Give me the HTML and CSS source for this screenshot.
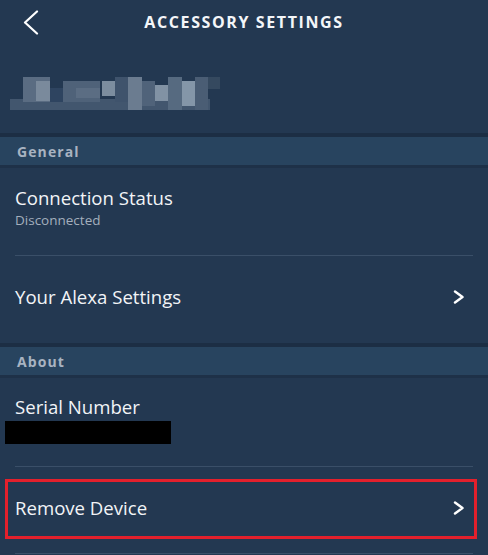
FILE: index.html
```html
<!DOCTYPE html>
<html lang="en">
<head>
<meta charset="utf-8">
<title>Accessory Settings</title>
<link rel="stylesheet" href="styles.css">
</head>
<body>
<div class="screen">
  <header class="header">
    <div class="back">
      <svg width="16" height="26" viewBox="0 0 16 26" aria-hidden="true">
        <polyline points="14,1.5 2,12.5 14,23.5" fill="none" stroke="#ffffff" stroke-width="2.2" stroke-linecap="round" stroke-linejoin="round"/>
      </svg>
    </div>
    <h1 class="title">ACCESSORY SETTINGS</h1>
    <div class="spacer"></div>
  </header>

  <div class="profile">
    <svg class="blur" width="220" height="36" viewBox="0 0 220 36" aria-hidden="true">
      <rect x="0" y="23" width="200" height="11" fill="#42566e"/>
      <rect x="13" y="1" width="27" height="25" fill="#5a6c82"/>
      <rect x="26" y="5" width="14" height="20" fill="#7a8a9c"/>
      <rect x="40" y="12" width="13" height="14" fill="#2e4460"/>
      <rect x="53" y="5" width="37" height="21" fill="#4f6279"/>
      <rect x="66" y="12" width="24" height="10" fill="#5b6d83"/>
      <rect x="92" y="5" width="13" height="15" fill="#7c8d9f"/>
      <rect x="105" y="1" width="13" height="25" fill="#3f536c"/>
      <rect x="118" y="1" width="14" height="33" fill="#6b7c90"/>
      <rect x="132" y="5" width="13" height="25" fill="#50637a"/>
      <rect x="145" y="9" width="13" height="16" fill="#8192a4"/>
      <rect x="158" y="1" width="14" height="33" fill="#566a80"/>
      <rect x="172" y="5" width="13" height="25" fill="#8496a8"/>
      <rect x="185" y="1" width="13" height="33" fill="#4a5d74"/>
      <rect x="198" y="1" width="12" height="12" fill="#35495f"/>
    </svg>
  </div>

  <div class="section">General</div>

  <div class="row row-status">
    <div class="row-text">
      <div class="row-title">Connection Status</div>
      <div class="row-sub">Disconnected</div>
    </div>
  </div>
  <div class="divider"></div>

  <div class="row row-link">
    <div class="row-title">Your Alexa Settings</div>
    <svg class="chev" width="12" height="14" viewBox="0 0 12 14" aria-hidden="true">
      <polyline points="2,1.5 9.5,7 2,12.5" fill="none" stroke="#ffffff" stroke-width="2.4" stroke-linecap="round" stroke-linejoin="round"/>
    </svg>
  </div>

  <div class="section">About</div>

  <div class="row row-serial">
    <div class="row-text">
      <div class="row-title">Serial Number</div>
      <div class="redacted"></div>
    </div>
  </div>
  <div class="divider"></div>

  <div class="row-remove">
    <div class="highlight">
      <div class="row-title">Remove Device</div>
      <svg class="chev" width="12" height="14" viewBox="0 0 12 14" aria-hidden="true">
        <polyline points="2,1.5 9.5,7 2,12.5" fill="none" stroke="#ffffff" stroke-width="2.4" stroke-linecap="round" stroke-linejoin="round"/>
      </svg>
    </div>
  </div>
  <div class="divider"></div>
</div>
</body>
</html>
```

FILE: styles.css
```css
* {
  box-sizing: border-box;
}

html, body {
  margin: 0;
  padding: 0;
  background: #233851;
}

body {
  font-family: "Open Sans", "Noto Sans", sans-serif;
  color: #ffffff;
}

.screen {
  width: 488px;
  height: 555px;
  overflow: hidden;
  background: #233851;
}

.header {
  height: 43px;
  display: grid;
  grid-template-columns: 1fr auto 1fr;
  align-items: center;
}

.back {
  padding-left: 23px;
  padding-top: 2px;
  display: flex;
  align-items: center;
}

.title {
  margin: 0;
  font-size: 16px;
  font-weight: 700;
  letter-spacing: 1.6px;
  color: #f4f6f9;
}

.profile {
  height: 90px;
  padding-top: 33px;
  padding-left: 10px;
}

.blur {
  display: block;
}

.section {
  height: 35px;
  border-top: 4px solid #1c2e44;
  border-bottom: 3px solid #1e3148;
  background: #28445f;
  padding-left: 17px;
  display: flex;
  align-items: center;
  font-size: 14px;
  font-weight: 700;
  letter-spacing: 1.1px;
  color: #a8b3c1;
}

.row {
  display: flex;
  align-items: center;
  padding: 0 23px 0 15px;
}

.row-status {
  height: 87px;
  align-items: flex-start;
  padding-top: 18px;
}

.row-link {
  height: 87px;
  justify-content: space-between;
  padding-bottom: 6px;
}

.row-serial {
  height: 88px;
  align-items: flex-start;
  padding-top: 17px;
  padding-left: 5px;
}

.row-serial .row-title {
  padding-left: 10px;
}

.row-title {
  font-size: 18.6px;
  line-height: 24px;
  color: #f2f4f7;
}

.row-sub {
  font-size: 13.5px;
  line-height: 18px;
  color: #a4afbd;
  margin-top: 1px;
}

.redacted {
  width: 166px;
  height: 23px;
  background: #000000;
  margin-top: 2px;
}

.divider {
  height: 1px;
  margin: 0 15px;
  background: #3a4f68;
}

.row-remove {
  height: 86px;
  padding: 12px 11px 14px 5px;
}

.highlight {
  height: 60px;
  border: 3px solid #e3202c;
  display: flex;
  align-items: center;
  justify-content: space-between;
  padding: 0 9px 3px 7px;
}

.chev {
  display: block;
  flex: none;
}
```
